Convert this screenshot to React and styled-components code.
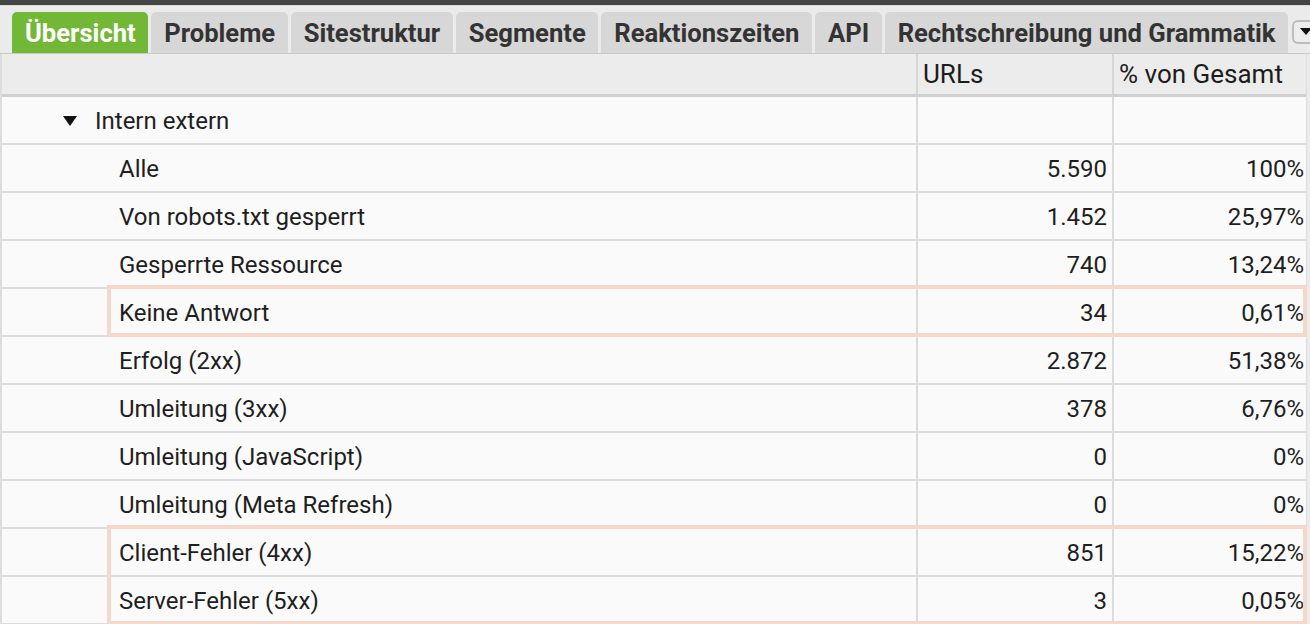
import React from "react";
import styled, { createGlobalStyle } from "styled-components";

const tabs = [
    "Übersicht",
    "Probleme",
    "Sitestruktur",
    "Segmente",
    "Reaktionszeiten",
    "API",
    "Rechtschreibung und Grammatik",
];

const rows = [
    { label: "Alle", urls: "5.590", pct: "100%" },
    { label: "Von robots.txt gesperrt", urls: "1.452", pct: "25,97%" },
    { label: "Gesperrte Ressource", urls: "740", pct: "13,24%" },
    { label: "Keine Antwort", urls: "34", pct: "0,61%", group: 1 },
    { label: "Erfolg (2xx)", urls: "2.872", pct: "51,38%" },
    { label: "Umleitung (3xx)", urls: "378", pct: "6,76%" },
    { label: "Umleitung (JavaScript)", urls: "0", pct: "0%" },
    { label: "Umleitung (Meta Refresh)", urls: "0", pct: "0%" },
    { label: "Client-Fehler (4xx)", urls: "851", pct: "15,22%", group: 2 },
    { label: "Server-Fehler (5xx)", urls: "3", pct: "0,05%", group: 2 },
];

// group consecutive rows that share a highlight
function groupRows(list) {
    const out = [];
    list.forEach((r) => {
        const last = out[out.length - 1];
        if (r.group && last && last.group === r.group) {
            last.items.push(r);
        } else {
            out.push({ group: r.group, items: [r] });
        }
    });
    return out;
}

function DataRow({ row }) {
    return (
        <Row>
            <Cell>
                <Label $indent>{row.label}</Label>
            </Cell>
            <NumCell>{row.urls}</NumCell>
            <NumCell $last>{row.pct}</NumCell>
        </Row>
    );
}

function App() {
    return (
        <>
            <GlobalStyle />
            <Page>
                <TopBar />
                <TabStrip>
                    {tabs.map((t, i) => (
                        <Tab key={t} $active={i === 0}>
                            {t}
                        </Tab>
                    ))}
                    <MoreButton>
                        <svg width="12" height="8" viewBox="0 0 12 8">
                            <path d="M0 0 L12 0 L6 7 Z" fill="#111" />
                        </svg>
                    </MoreButton>
                </TabStrip>
                <Table>
                    <HeaderRow>
                        <HeadCell />
                        <HeadCell>URLs</HeadCell>
                        <HeadCell $last>% von Gesamt</HeadCell>
                    </HeaderRow>
                    <Row>
                        <Cell>
                            <Toggle>
                                <svg width="14" height="10" viewBox="0 0 14 10">
                                    <path d="M0 0 L14 0 L7 10 Z" fill="#111" />
                                </svg>
                                Intern extern
                            </Toggle>
                        </Cell>
                        <NumCell />
                        <NumCell $last />
                    </Row>
                    {groupRows(rows).map((g, gi) =>
                        g.group ? (
                            <Highlight key={gi}>
                                {g.items.map((r) => (
                                    <DataRow key={r.label} row={r} />
                                ))}
                            </Highlight>
                        ) : (
                            <DataRow key={g.items[0].label} row={g.items[0]} />
                        )
                    )}
                </Table>
            </Page>
        </>
    );
}

const GlobalStyle = createGlobalStyle`
    html, body {
        margin: 0;
        padding: 0;
        background: #ebebeb;
        overflow: hidden;
    }
    * {
        box-sizing: border-box;
    }
`;

const Page = styled.div`
    width: 1310px;
    height: 624px;
    display: flex;
    flex-direction: column;
    font-family: Roboto, "Liberation Sans", sans-serif;
    background: #ebebeb;
    overflow: hidden;
`;

const TopBar = styled.div`
    height: 6px;
    background: #444444;
    border-bottom: 1px solid #dcdcdc;
    flex: none;
`;

const TabStrip = styled.div`
    display: flex;
    align-items: flex-end;
    gap: 3px;
    padding: 6px 0 0 12px;
    height: 48px;
    border-bottom: 1px solid #c9c9c9;
    flex: none;
    overflow: hidden;
`;

const Tab = styled.div`
    height: 41px;
    padding: 0 12.5px 0 13px;
    display: flex;
    align-items: center;
    border-radius: 5px 5px 0 0;
    font-size: 25.6px;
    font-weight: 700;
    white-space: nowrap;
    background: ${(p) => (p.$active ? "#73b737" : "#d7d7d7")};
    color: ${(p) => (p.$active ? "#ffffff" : "#333333")};
    flex: none;
`;

const MoreButton = styled.div`
    width: 28px;
    height: 24px;
    margin: 0 0 9px 1px;
    border: 2px solid #bdbdbd;
    border-radius: 6px;
    background: #ededed;
    display: flex;
    align-items: center;
    justify-content: flex-start;
    padding-left: 6px;
    flex: none;
`;

const Table = styled.div`
    display: flex;
    flex-direction: column;
    width: 1307px;
    border-left: 2px solid #dddddd;
    border-right: 1px solid #dddddd;
`;

const HeaderRow = styled.div`
    display: grid;
    grid-template-columns: 916px 196px 1fr;
    height: 43px;
    background: #ececec;
    border-bottom: 3px solid #d0d0d0;
`;

const HeadCell = styled.div`
    display: flex;
    align-items: center;
    padding: 0 0 1px 5px;
    font-size: 26px;
    color: #1c1c1c;
    border-right: ${(p) => (p.$last ? "none" : "2px solid #d6d6d6")};
`;

const Row = styled.div`
    display: grid;
    grid-template-columns: 916px 196px 1fr;
    height: 48px;
    flex: none;
    background: #fafafa;
    border-bottom: 2px solid #dcdcdc;
`;

const Cell = styled.div`
    display: flex;
    align-items: center;
    padding-top: 2px;
    border-right: 2px solid #dcdcdc;
    font-size: 24px;
    color: #1e1e1e;
`;

const Label = styled.span`
    padding-left: ${(p) => (p.$indent ? "117px" : "0")};
`;

const Toggle = styled.span`
    display: flex;
    align-items: center;
    gap: 18px;
    padding-left: 61px;
`;

const NumCell = styled.div`
    display: flex;
    align-items: center;
    justify-content: flex-end;
    padding: 2px ${(p) => (p.$last ? "2px" : "5px")} 0 0;
    border-right: ${(p) => (p.$last ? "none" : "2px solid #dcdcdc")};
    font-size: 24px;
    color: #1e1e1e;
`;

const Highlight = styled.div`
    position: relative;
    flex: none;
    &::after {
        content: "";
        position: absolute;
        left: 105px;
        right: -1px;
        top: -4px;
        bottom: 0;
        border: 4px solid #f6d8cb;
        pointer-events: none;
    }
`;

export default App;
